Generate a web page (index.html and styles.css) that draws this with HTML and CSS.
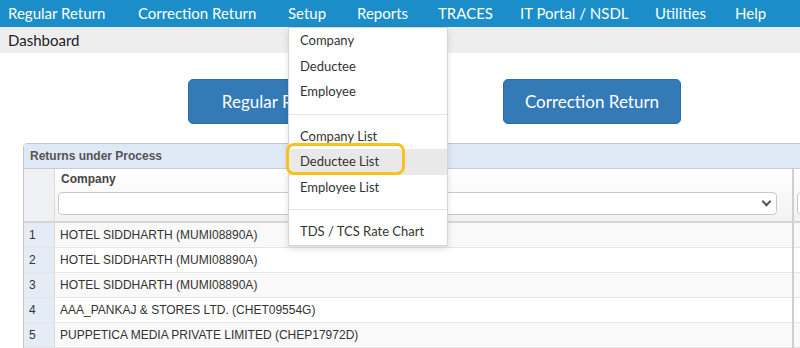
FILE: index.html
```html
<!DOCTYPE html>
<html lang="en">
<head>
    <meta charset="UTF-8">
    <meta name="viewport" content="width=device-width, initial-scale=1.0">
    <title>Dashboard</title>
    <link rel="stylesheet" href="styles.css">
</head>
<body>
    <nav class="topnav">
        <ul class="menu">
            <li>Regular Return</li>
            <li>Correction Return</li>
            <li class="has-drop">Setup
                <div class="dropdown">
                    <div class="drop-item">Company</div>
                    <div class="drop-item">Deductee</div>
                    <div class="drop-item">Employee</div>
                    <div class="divider"></div>
                    <div class="drop-item">Company List</div>
                    <div class="drop-item active">Deductee List<span class="ring"></span></div>
                    <div class="drop-item">Employee List</div>
                    <div class="divider"></div>
                    <div class="drop-item">TDS / TCS Rate Chart</div>
                </div>
            </li>
            <li>Reports</li>
            <li>TRACES</li>
            <li>IT Portal / NSDL</li>
            <li>Utilities</li>
            <li>Help</li>
        </ul>
    </nav>
    <div class="crumb">Dashboard</div>

    <div class="page">
        <div class="actions">
            <button class="btn">Regular Return</button>
            <button class="btn">Correction Return</button>
        </div>

        <div class="panel">
            <div class="panel-title">Returns under Process</div>
            <table class="grid">
                <thead>
                    <tr>
                        <th class="num"></th>
                        <th class="company">
                            <div class="th-label">Company</div>
                            <div class="select"><span class="chev"></span></div>
                        </th>
                        <th class="next">
                            <div class="th-label">&nbsp;</div>
                            <div class="select"></div>
                        </th>
                    </tr>
                </thead>
                <tbody>
                    <tr class="odd"><td class="num">1</td><td>HOTEL SIDDHARTH (MUMI08890A)</td><td></td></tr>
                    <tr><td class="num">2</td><td>HOTEL SIDDHARTH (MUMI08890A)</td><td></td></tr>
                    <tr class="odd"><td class="num">3</td><td>HOTEL SIDDHARTH (MUMI08890A)</td><td></td></tr>
                    <tr><td class="num">4</td><td>AAA_PANKAJ &amp; STORES LTD. (CHET09554G)</td><td></td></tr>
                    <tr class="odd"><td class="num">5</td><td>PUPPETICA MEDIA PRIVATE LIMITED (CHEP17972D)</td><td></td></tr>
                </tbody>
            </table>
        </div>
    </div>
</body>
</html>
```

FILE: styles.css
```css
body {
    margin: 0;
    overflow: hidden;
    font-family: Lato, "Open Sans", sans-serif;
    color: #333;
    background: #fff;
}
.topnav {
    background: #1b8dc8;
    height: 27px;
}
.menu {
    list-style: none;
    margin: 0;
    padding: 0 0 0 8px;
    display: flex;
    height: 27px;
    align-items: center;
    white-space: nowrap;
}
.menu li {
    flex: none;
    color: #fff;
    font-size: 15px;
    position: relative;
    line-height: 27px;
}
.menu li:nth-child(1) { width: 130px; }
.menu li:nth-child(2) { width: 150px; }
.menu li:nth-child(3) { width: 69px; }
.menu li:nth-child(4) { width: 81px; }
.menu li:nth-child(5) { width: 82px; }
.menu li:nth-child(6) { width: 135px; }
.menu li:nth-child(7) { width: 80px; }
.dropdown {
    position: absolute;
    top: 27px;
    left: 0;
    width: 158px;
    background: #fff;
    border: 1px solid #d4d4d4;
    box-shadow: 0 3px 6px rgba(0, 0, 0, 0.12);
    padding: 0;
    z-index: 5;
}
.drop-item {
    position: relative;
    color: #333;
    font-size: 13px;
    line-height: 25.5px;
    padding: 0 11px;
}
.drop-item.active {
    background: #e9e9e9;
}
.ring {
    position: absolute;
    left: -3px;
    top: -6px;
    width: 113px;
    height: 26px;
    border: 3px solid #f7c21b;
    border-radius: 8px;
}
.divider {
    height: 1px;
    background: #e5e5e5;
    margin: 9px 0;
}
.crumb {
    background: #eeeeef;
    height: 26px;
    line-height: 26px;
    padding-left: 8px;
    font-size: 15px;
    color: #222;
}
.page {
    width: 869px;
}
.actions {
    display: flex;
    justify-content: center;
    gap: 137px;
    margin-top: 26px;
}
.btn {
    width: 178px;
    height: 45px;
    background: #337ab7;
    border: 1px solid #2e6da4;
    border-radius: 5px;
    color: #fff;
    font-family: Lato, "Open Sans", sans-serif;
    font-size: 17px;
}
.panel {
    margin: 19px 0 0 23px;
    border: 1px solid #c5c5c5;
    border-radius: 4px 4px 0 0;
    font-family: "Liberation Sans", Arial, sans-serif;
    font-size: 12px;
}
.panel-title {
    background: #dfe8f5;
    height: 24px;
    line-height: 24px;
    padding-left: 6px;
    font-weight: bold;
    color: #555;
    border-bottom: 1px solid #c8ccd2;
}
.grid {
    width: 100%;
    border-collapse: collapse;
}
.grid th {
    background: linear-gradient(#fff, #f2f2f2);
    text-align: left;
    vertical-align: top;
    padding: 3px 3px 6px 3px;
    border-bottom: 2px solid #d6d6d6;
    border-left: 1px solid #dcdcdc;
}
.grid th.num {
    width: 24px;
    background: #eef0f4;
    border-left: none;
}
.th-label {
    font-size: 12px;
    font-weight: bold;
    color: #444;
    padding-left: 3px;
    height: 20px;
    line-height: 15px;
}
.select {
    position: relative;
    height: 21px;
    background: #fff;
    border: 1px solid #c9c9c9;
    border-radius: 4px;
}
.company .select {
    margin-right: 12px;
}
.chev {
    position: absolute;
    right: 6px;
    top: 5px;
    width: 5px;
    height: 5px;
    border-right: 2px solid #555;
    border-bottom: 2px solid #555;
    transform: rotate(45deg);
}
.grid th.company {
    width: 731px;
}
.grid td {
    height: 24px;
    padding: 0 0 0 5px;
    border-bottom: 1px solid #e5e5e5;
    border-left: 1px solid #dcdcdc;
    color: #333;
}
.grid td.num {
    background: #e6ecf5;
    border-left: none;
    padding-left: 5px;
}
.grid tr.odd td {
    background: #f9f9f9;
}
.grid tr.odd td.num {
    background: #e6ecf5;
}
.grid td:last-child, .grid th.next {
    border-left: 2px solid #cfcfcf;
}
```
